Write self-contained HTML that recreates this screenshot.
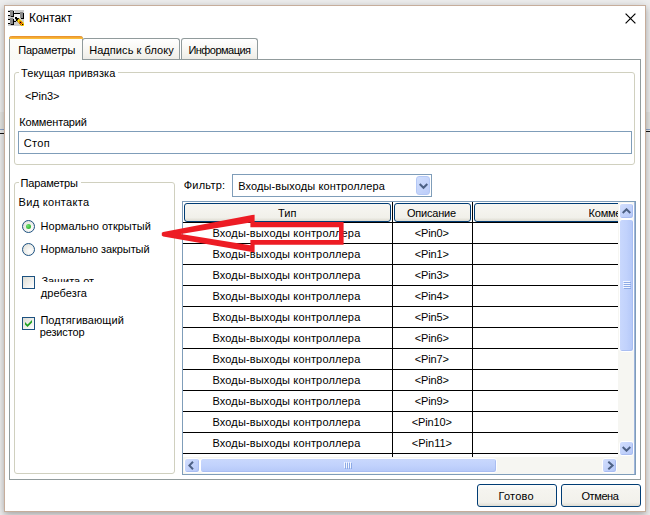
<!DOCTYPE html>
<html><head><meta charset="utf-8"><title>Контакт</title>
<style>
*{box-sizing:border-box;margin:0;padding:0}
html,body{width:650px;height:515px;overflow:hidden;background:#eeeeee}
body{position:relative;font-family:"Liberation Sans",sans-serif;font-size:11px;color:#000;line-height:13px}
.abs{position:absolute}
#shadow{left:4px;top:5px;width:642px;height:507px;box-shadow:0 2px 9px rgba(0,0,0,.22),0 3px 5px rgba(0,0,0,.12)}
#win{left:4px;top:5px;width:642px;height:507px;background:#fff;border:1px solid #c6ad9b}
.t{position:absolute;white-space:nowrap}
.tab{top:38px;height:22px;border:1px solid #919b9c;border-bottom:none;border-radius:3px 3px 0 0;background:linear-gradient(#fff,#f4f3ee 70%,#ecebe5)}
#pane{left:9px;top:59px;width:632px;height:421px;border:1px solid #919b9c;background:#fff}
.grp{border:1px solid #d0d0bf;border-radius:3px}
.gap{background:#fff;height:3px}
.inp{border:1px solid #7f9db9;background:#fff}
.btn{border:1px solid #003c74;border-radius:3px;background:linear-gradient(#fdfdfc,#f5f4ef 25%,#f2f1eb 82%,#dfddd3)}
.hd{border:1px solid #003c74;border-bottom-width:1px;border-radius:3px;background:linear-gradient(#f7f6f2,#f1f0ea 80%,#dddbd0);height:19px;top:203px}
.row{left:183px;width:435px;height:1px;background:#000}
.sb{border:1px solid #fff;border-radius:3px;background:linear-gradient(135deg,#d2defd,#b4c7f8);box-shadow:inset -1px -1px 0 #aabef2}
.rad{width:13px;height:13px;border-radius:50%;border:1px solid #1c5180;background:radial-gradient(circle at 65% 65%,#fff,#dcdcd4)}
.chk{width:13px;height:13px;border:1px solid #1c5180;background:linear-gradient(135deg,#dcdcd4,#fff)}
</style></head><body>
<div class="abs" style="left:0;top:112px;width:650px;height:17px;background:#e6e6e3"></div>
<div class="abs" style="left:0;top:129px;width:650px;height:1px;background:#8ea6cc"></div>
<div class="abs" style="left:0;top:132.5px;width:10px;height:1.5px;background:#111"></div><div class="abs" style="left:640px;top:130.5px;width:10px;height:1.2px;background:#111"></div>
<div class="abs" id="shadow"></div>
<div class="abs" id="win"></div>

<svg class="abs" style="left:8px;top:10px" width="16" height="16" viewBox="0 0 16 16" shape-rendering="crispEdges">
<rect width="16" height="16" fill="#cdcdcd"/>
<rect x="0" y="2" width="2" height="3" fill="#f4f4f4"/><rect x="0" y="10" width="2" height="3" fill="#f4f4f4"/>
<path d="M6 4h6v4l-2 1h-3l-1 2z" fill="#f2f2f2"/><rect x="6" y="1" width="1" height="2" fill="#f4f4f4"/>
<rect x="2" y="0" width="3" height="7" fill="#8a8a8a"/><path d="M5 1h1v6h-3v-1h2z" fill="#000"/>
<rect x="0" y="1" width="2" height="1" fill="#000"/><rect x="0" y="5" width="2" height="1" fill="#000"/>
<rect x="2" y="8" width="3" height="7" fill="#8a8a8a"/><path d="M5 9h1v6h-3v-1h2z" fill="#000"/>
<rect x="0" y="9" width="2" height="1" fill="#000"/><rect x="0" y="13" width="2" height="1" fill="#000"/>
<rect x="12" y="2" width="3" height="6" fill="#8a8a8a"/><path d="M15 3h1v6h-3v-1h2z" fill="#000"/>
<rect x="6" y="3" width="6" height="1" fill="#000"/><rect x="6" y="11" width="2" height="1" fill="#000"/>
<path d="M7 7h2v1h2v1h-1v2h-2v-2h-1z" fill="#000"/>
<path d="M9 11l2-2.5l5 4.5v3h-3z" fill="#ffe800" shape-rendering="auto"/>
<path d="M11 9.5l5 5M9.5 11.5l4.5 4.5" stroke="#7a0000" stroke-width="0.9" stroke-dasharray="1 1" shape-rendering="auto"/>
<path d="M11.5 11.5l3.5 3.5" stroke="#e00000" stroke-width="1.6" stroke-dasharray="1 1" shape-rendering="auto"/>
<rect x="12" y="12" width="1" height="1" fill="#000"/><rect x="14" y="14" width="1" height="1" fill="#000"/>
</svg>
<svg class="abs" style="left:624.5px;top:12.5px" width="11" height="11" viewBox="0 0 11 11"><path d="M0.6 0.6L10.4 10.4M10.4 0.6L0.6 10.4" stroke="#000" stroke-width="1.2" fill="none"/></svg>

<!-- tabs -->
<div class="abs tab" style="left:82px;width:98px"></div>
<div class="abs tab" style="left:181px;width:77px"></div>
<div class="abs" id="pane"></div>
<div class="abs" style="left:9px;top:36px;width:74px;height:24px;border:1px solid #919b9c;border-bottom:none;border-top:none;border-radius:3px 3px 0 0;background:linear-gradient(#fdfdfb,#fafaf6)"></div>
<div class="abs" style="left:9px;top:36px;width:74px;height:3px;border-radius:3px 3px 0 0;background:linear-gradient(#e68b2c,#ffc73c)"></div>

<!-- group 1 -->
<div class="abs grp" style="left:14px;top:72px;width:621px;height:93px"></div>
<div class="abs gap" style="left:19px;top:71px;width:99px"></div>
<div class="abs inp" style="left:18px;top:131px;width:614px;height:23px"></div>

<!-- group 2 -->
<div class="abs grp" style="left:14px;top:182px;width:161px;height:292px"></div>
<div class="abs gap" style="left:19px;top:181px;width:62px"></div>
<div class="abs rad" style="left:22px;top:220px"></div>
<div class="abs" style="left:26px;top:224px;width:5px;height:5px;border-radius:50%;background:radial-gradient(circle at 35% 35%,#6fe46f,#1f9e1f)"></div>
<div class="abs rad" style="left:22px;top:243px"></div>
<div class="abs chk" style="left:22px;top:276px"></div>
<div class="abs chk" style="left:22px;top:317px"></div>
<svg class="abs" style="left:25px;top:320px" width="7" height="7" viewBox="0 0 7 7"><path d="M0 2v2.4l2.5 2.5l4.5-4.5v-2.4l-4.5 4.5z" fill="#21a121"/></svg>

<!-- filter -->
<div class="abs inp" style="left:232px;top:174px;width:200px;height:23px"></div>
<div class="abs" style="left:416px;top:176px;width:14px;height:19px;border-radius:3px;border:1px solid #b4c8f6;background:linear-gradient(135deg,#d0defd,#bccdf9)"></div>
<svg class="abs" style="left:419px;top:183px" width="9" height="7" viewBox="0 0 9 7"><path d="M0.7 1L4.5 4.8L8.3 1" stroke="#4d6185" stroke-width="2" fill="none"/></svg>

<!-- table -->
<div class="abs inp" style="left:182px;top:201px;width:454px;height:274px"></div>
<div class="abs hd" style="left:184px;width:207px"></div>
<div class="abs hd" style="left:394px;width:77px"></div>
<div class="abs hd" style="left:474px;width:200px;clip-path:inset(0 56px 0 0)"></div>
<div class="abs" style="left:392px;top:202px;width:1px;height:255px;background:#000"></div>
<div class="abs" style="left:472px;top:202px;width:1px;height:255px;background:#000"></div>
<div class="abs row" style="top:222px"></div>
<div class="abs row" style="top:243px"></div>
<div class="abs row" style="top:264px"></div>
<div class="abs row" style="top:285px"></div>
<div class="abs row" style="top:306px"></div>
<div class="abs row" style="top:327px"></div>
<div class="abs row" style="top:348px"></div>
<div class="abs row" style="top:369px"></div>
<div class="abs row" style="top:390px"></div>
<div class="abs row" style="top:411px"></div>
<div class="abs row" style="top:432px"></div>
<div class="abs row" style="top:453px"></div>
<div class="abs btn" style="left:477px;top:484px;width:80px;height:23px"></div>
<div class="abs btn" style="left:561px;top:484px;width:80px;height:23px"></div>


<div class="t" style="left:29px;top:11px;letter-spacing:-0.05px;font-size:12px;line-height:15px">Контакт</div>
<div class="t" style="left:18.2px;top:44px;letter-spacing:-0.17px">Параметры</div>
<div class="t" style="left:89.2px;top:44px;letter-spacing:0.06px">Надпись к блоку</div>
<div class="t" style="left:188.4px;top:44px;letter-spacing:-0.53px">Информация</div>
<div class="t" style="left:21px;top:67px;letter-spacing:0.09px">Текущая привязка</div>
<div class="t" style="left:25px;top:90px;letter-spacing:-0.09px">&lt;Pin3&gt;</div>
<div class="t" style="left:19.2px;top:116px;letter-spacing:-0.15px">Комментарий</div>
<div class="t" style="left:23.8px;top:137px;letter-spacing:0.34px">Стоп</div>
<div class="t" style="left:20.6px;top:177px;letter-spacing:-0.17px">Параметры</div>
<div class="t" style="left:18.6px;top:196px;letter-spacing:0.31px">Вид контакта</div>
<div class="t" style="left:40.6px;top:220px;letter-spacing:0.01px">Нормально открытый</div>
<div class="t" style="left:40.6px;top:243px;letter-spacing:-0.08px">Нормально закрытый</div>
<div class="t" style="left:41.4px;top:275px;letter-spacing:-0.04px;height:7px;overflow:hidden">Защита от</div>
<div class="t" style="left:40.8px;top:287px;letter-spacing:0.09px">дребезга</div>
<div class="t" style="left:40.4px;top:314px;letter-spacing:0.05px">Подтягивающий</div>
<div class="t" style="left:39.8px;top:326px;letter-spacing:-0.16px">резистор</div>
<div class="t" style="left:183.8px;top:179px;letter-spacing:0.21px">Фильтр:</div>
<div class="t" style="left:238.2px;top:180px;letter-spacing:0.11px">Входы-выходы контроллера</div>
<div class="t" style="left:278px;top:207px;letter-spacing:0.01px">Тип</div>
<div class="t" style="left:407px;top:207px;letter-spacing:-0.21px">Описание</div>
<div class="t" style="left:588.6px;top:207px;letter-spacing:-0.23px;width:29.4px;overflow:hidden">Комментарий</div>
<div class="t" style="left:212.4px;top:227px;letter-spacing:0.16px">Входы-выходы контроллера</div>
<div class="t" style="left:414.8px;top:227px;letter-spacing:-0.13px">&lt;Pin0&gt;</div>
<div class="t" style="left:212.4px;top:248px;letter-spacing:0.16px">Входы-выходы контроллера</div>
<div class="t" style="left:414.8px;top:248px;letter-spacing:-0.13px">&lt;Pin1&gt;</div>
<div class="t" style="left:212.4px;top:269px;letter-spacing:0.16px">Входы-выходы контроллера</div>
<div class="t" style="left:414.8px;top:269px;letter-spacing:-0.13px">&lt;Pin3&gt;</div>
<div class="t" style="left:212.4px;top:290px;letter-spacing:0.16px">Входы-выходы контроллера</div>
<div class="t" style="left:414.8px;top:290px;letter-spacing:-0.13px">&lt;Pin4&gt;</div>
<div class="t" style="left:212.4px;top:311px;letter-spacing:0.16px">Входы-выходы контроллера</div>
<div class="t" style="left:414.8px;top:311px;letter-spacing:-0.13px">&lt;Pin5&gt;</div>
<div class="t" style="left:212.4px;top:332px;letter-spacing:0.16px">Входы-выходы контроллера</div>
<div class="t" style="left:414.8px;top:332px;letter-spacing:-0.13px">&lt;Pin6&gt;</div>
<div class="t" style="left:212.4px;top:353px;letter-spacing:0.16px">Входы-выходы контроллера</div>
<div class="t" style="left:414.8px;top:353px;letter-spacing:-0.13px">&lt;Pin7&gt;</div>
<div class="t" style="left:212.4px;top:374px;letter-spacing:0.16px">Входы-выходы контроллера</div>
<div class="t" style="left:414.8px;top:374px;letter-spacing:-0.13px">&lt;Pin8&gt;</div>
<div class="t" style="left:212.4px;top:395px;letter-spacing:0.16px">Входы-выходы контроллера</div>
<div class="t" style="left:414.8px;top:395px;letter-spacing:-0.13px">&lt;Pin9&gt;</div>
<div class="t" style="left:212.4px;top:416px;letter-spacing:0.16px">Входы-выходы контроллера</div>
<div class="t" style="left:411.8px;top:416px;letter-spacing:-0.13px">&lt;Pin10&gt;</div>
<div class="t" style="left:212.4px;top:437px;letter-spacing:0.16px">Входы-выходы контроллера</div>
<div class="t" style="left:411.8px;top:437px;letter-spacing:0.01px">&lt;Pin11&gt;</div>
<div class="t" style="left:498.4px;top:490px;letter-spacing:0.27px">Готово</div>
<div class="t" style="left:581.4px;top:490px;letter-spacing:-0.39px">Отмена</div>

<!-- scrollbars -->
<div class="abs" style="left:618px;top:202px;width:17px;height:272px;background:#f6f6f2"></div>
<div class="abs" style="left:183px;top:457px;width:452px;height:17px;background:#f6f6f2"></div>
<div class="abs sb" style="left:619px;top:203px;width:15px;height:16px"></div>
<svg class="abs" style="left:622px;top:208px" width="9" height="6" viewBox="0 0 9 6"><path d="M0.7 5L4.5 1.3L8.3 5" stroke="#4d6185" stroke-width="2" fill="none"/></svg>
<div class="abs sb" style="left:619px;top:219px;width:15px;height:133px;background:linear-gradient(90deg,#c9d8fd,#c1d2fc 50%,#b5c8f8)"></div>
<div class="abs" style="left:623px;top:281px;width:7px;height:8px;background:repeating-linear-gradient(#f2f6ff 0 1px,transparent 1px 2px)"></div>
<div class="abs" style="left:624px;top:282px;width:7px;height:8px;background:repeating-linear-gradient(#8caae6 0 1px,transparent 1px 2px)"></div>
<div class="abs" style="left:634px;top:202px;width:1px;height:272px;background:#9fb5dc"></div>
<div class="abs sb" style="left:619px;top:441px;width:15px;height:15px"></div>
<svg class="abs" style="left:622px;top:446px" width="9" height="6" viewBox="0 0 9 6"><path d="M0.7 1L4.5 4.7L8.3 1" stroke="#4d6185" stroke-width="2" fill="none"/></svg>
<div class="abs sb" style="left:184px;top:458px;width:16px;height:15px"></div>
<svg class="abs" style="left:188px;top:461px" width="6" height="9" viewBox="0 0 6 9"><path d="M5 0.7L1.3 4.5L5 8.3" stroke="#4d6185" stroke-width="2" fill="none"/></svg>
<div class="abs sb" style="left:200px;top:458px;width:297px;height:15px;background:linear-gradient(#c9d8fd,#c1d2fc 50%,#b5c8f8)"></div>
<div class="abs" style="left:344px;top:462px;width:8px;height:6px;background:repeating-linear-gradient(90deg,#f2f6ff 0 1px,transparent 1px 2px)"></div>
<div class="abs" style="left:345px;top:463px;width:8px;height:6px;background:repeating-linear-gradient(90deg,#8caae6 0 1px,transparent 1px 2px)"></div>
<div class="abs sb" style="left:602px;top:458px;width:15px;height:15px"></div>
<svg class="abs" style="left:607px;top:461px" width="8" height="9" viewBox="0 0 8 9"><path d="M1.3 0.7L5.6 4.5L1.3 8.3" stroke="#4d6185" stroke-width="2" fill="none"/></svg>

<!-- arrow -->
<svg class="abs" style="left:0;top:0" width="650" height="515" viewBox="0 0 650 515"><path fill="#ed1c24" fill-rule="evenodd" d="M161.8 232.8L163.2 232L252 215L254.6 214.8V222H343.6V244.8H254.6V252.2L252 252L163.2 236.4L161.8 235.6ZM180.8 233.9L250.4 245.3V240.1H339V227.2H250.4V222.4Z"/></svg>
</body></html>
